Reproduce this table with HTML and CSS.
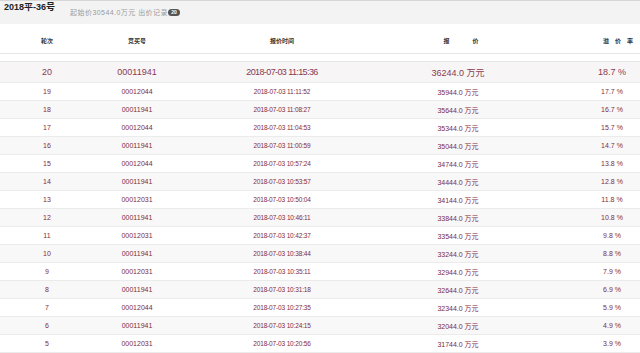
FILE: index.html
```html
<!DOCTYPE html>
<html lang="zh-CN">
<head>
<meta charset="utf-8">
<title>2018平-36号 出价记录</title>
<link rel="stylesheet" href="styles.css">
</head>
<body>
<div class="page">
  <div class="topbar">
    <span class="title">2018平-36号</span>
    <span class="sub">起始价30544.0万元 出价记录</span>
    <span class="badge">20</span>
  </div>
  <div class="table">
    <div class="head">
      <div class="c">轮次</div>
      <div class="c">竞买号</div>
      <div class="c">报价时间</div>
      <div class="c h4"><span>报</span><span>价</span></div>
      <div class="c h5"><span>溢</span><span>价</span><span>率</span></div>
    </div>
    <div class="spacer"></div>
    <div class="row first">
      <div class="c">20</div><div class="c">00011941</div><div class="c t">2018-07-03 11:15:36</div><div class="c">36244.0 万元</div><div class="c p">18.7 %</div>
    </div>
    <div class="row"><div class="c">19</div><div class="c">00012044</div><div class="c t">2018-07-03 11:11:52</div><div class="c">35944.0 万元</div><div class="c p">17.7 %</div></div>
    <div class="row alt"><div class="c">18</div><div class="c">00011941</div><div class="c t">2018-07-03 11:08:27</div><div class="c">35644.0 万元</div><div class="c p">16.7 %</div></div>
    <div class="row"><div class="c">17</div><div class="c">00012044</div><div class="c t">2018-07-03 11:04:53</div><div class="c">35344.0 万元</div><div class="c p">15.7 %</div></div>
    <div class="row alt"><div class="c">16</div><div class="c">00011941</div><div class="c t">2018-07-03 11:00:59</div><div class="c">35044.0 万元</div><div class="c p">14.7 %</div></div>
    <div class="row"><div class="c">15</div><div class="c">00012044</div><div class="c t">2018-07-03 10:57:24</div><div class="c">34744.0 万元</div><div class="c p">13.8 %</div></div>
    <div class="row alt"><div class="c">14</div><div class="c">00011941</div><div class="c t">2018-07-03 10:53:57</div><div class="c">34444.0 万元</div><div class="c p">12.8 %</div></div>
    <div class="row"><div class="c">13</div><div class="c">00012031</div><div class="c t">2018-07-03 10:50:04</div><div class="c">34144.0 万元</div><div class="c p">11.8 %</div></div>
    <div class="row alt"><div class="c">12</div><div class="c">00011941</div><div class="c t">2018-07-03 10:46:11</div><div class="c">33844.0 万元</div><div class="c p">10.8 %</div></div>
    <div class="row"><div class="c">11</div><div class="c">00012031</div><div class="c t">2018-07-03 10:42:37</div><div class="c">33544.0 万元</div><div class="c p">9.8 %</div></div>
    <div class="row alt"><div class="c">10</div><div class="c">00011941</div><div class="c t">2018-07-03 10:38:44</div><div class="c">33244.0 万元</div><div class="c p">8.8 %</div></div>
    <div class="row"><div class="c">9</div><div class="c">00012031</div><div class="c t">2018-07-03 10:35:11</div><div class="c">32944.0 万元</div><div class="c p">7.9 %</div></div>
    <div class="row alt"><div class="c">8</div><div class="c">00011941</div><div class="c t">2018-07-03 10:31:18</div><div class="c">32644.0 万元</div><div class="c p">6.9 %</div></div>
    <div class="row"><div class="c">7</div><div class="c">00012044</div><div class="c t">2018-07-03 10:27:35</div><div class="c">32344.0 万元</div><div class="c p">5.9 %</div></div>
    <div class="row alt"><div class="c">6</div><div class="c">00011941</div><div class="c t">2018-07-03 10:24:15</div><div class="c">32044.0 万元</div><div class="c p">4.9 %</div></div>
    <div class="row"><div class="c">5</div><div class="c">00012031</div><div class="c t">2018-07-03 10:20:56</div><div class="c">31744.0 万元</div><div class="c p">3.9 %</div></div>
  </div>
</div>
</body>
</html>
```
FILE: styles.css
```css
html, body {
  margin: 0;
  padding: 0;
  background: #ffffff;
}
body {
  width: 640px;
  height: 353px;
  overflow: hidden;
  font-family: "Liberation Sans", "Noto Sans CJK SC", sans-serif;
}
.page {
  width: 640px;
}
.topbar {
  height: 23px;
  background: #f3f3f3;
  border-top: 1px solid #d6d6d6;
  display: flex;
  align-items: flex-start;
  padding-left: 4px;
}
.title {
  font-size: 9px;
  font-weight: bold;
  color: #222;
  line-height: 11px;
  margin-top: 1px;
}
.sub {
  font-size: 7px;
  line-height: 8px;
  color: #9a9a9a;
  letter-spacing: 0.45px;
  margin-left: 15px;
  margin-top: 8px;
}
.badge {
  margin-top: 8px;
  width: 12px;
  height: 7px;
  border-radius: 4px;
  background: #555;
  color: #fff;
  font-size: 5px;
  font-weight: bold;
  line-height: 7px;
  text-align: center;
}
.table {
  display: flex;
  flex-direction: column;
}
.head, .row {
  display: grid;
  grid-template-columns: 94px 86px 204px 148px 108px;
  align-items: center;
}
.c {
  text-align: center;
  white-space: nowrap;
}
.c.p {
  padding-left: 52px;
}
.head {
  height: 29px;
  border-bottom: 1px solid #e6e6e6;
  align-items: end;
}
.head .c {
  font-size: 6px;
  font-weight: bold;
  color: #333;
  line-height: 8px;
  padding-bottom: 8px;
}
.head .h4 {
  display: flex;
  justify-content: center;
  gap: 23px;
  padding-left: 6px;
}
.head .h5 {
  display: flex;
  justify-content: flex-start;
  gap: 6px;
  padding-left: 71px;
}
.spacer {
  height: 7px;
}
.row {
  height: 17px;
  border-bottom: 1px solid #ebebeb;
  font-size: 7px;
  color: #7e2c42;
  background: #ffffff;
}
.row.alt {
  background: #f8f8f8;
}
.row .t {
  font-size: 6.5px;
  letter-spacing: -0.15px;
}
.row.first {
  height: 20px;
  border-top: 1px solid #e6e6e6;
  background: #f7f5f6;
  font-size: 9px;
  color: #8a3a50;
}
.row.first .t {
  font-size: 9px;
  letter-spacing: -0.6px;
}
```
